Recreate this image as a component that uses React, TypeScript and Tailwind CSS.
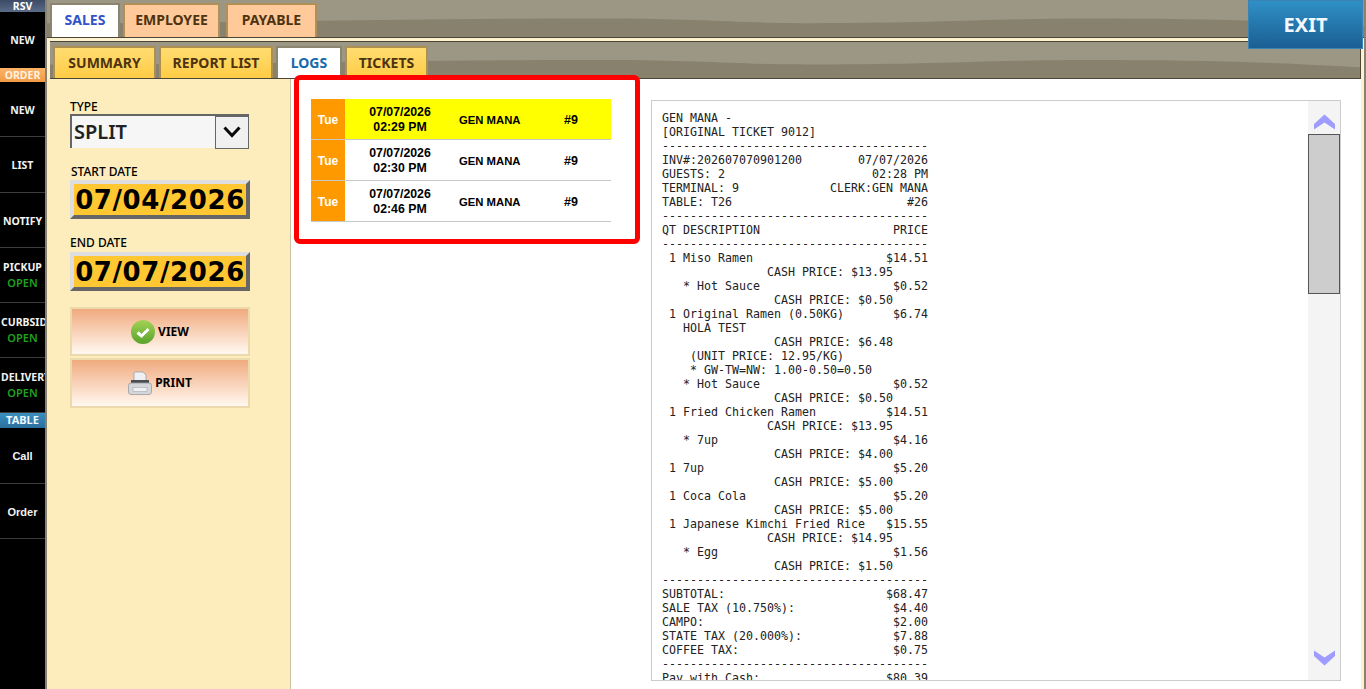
import React from "react";

const r = (l: string, p: string) => l.padEnd(38 - p.length) + p;
const dash = "-".repeat(38);
const cash = (v: string, n = 16) => " ".repeat(n) + "CASH PRICE: " + v;
const lines: string[] = [
  "GEN MANA -",
  "[ORIGINAL TICKET 9012]",
  dash,
  r("INV#:202607070901200", "07/07/2026"),
  r("GUESTS: 2", "02:28 PM"),
  r("TERMINAL: 9", "CLERK:GEN MANA"),
  r("TABLE: T26", "#26"),
  dash,
  r("QT DESCRIPTION", "PRICE"),
  dash,
  r(" 1 Miso Ramen", "$14.51"),
  cash("$13.95", 15),
  r("   * Hot Sauce", "$0.52"),
  cash("$0.50"),
  r(" 1 Original Ramen (0.50KG)", "$6.74"),
  "   HOLA TEST",
  cash("$6.48"),
  "    (UNIT PRICE: 12.95/KG)",
  "    * GW-TW=NW: 1.00-0.50=0.50",
  r("   * Hot Sauce", "$0.52"),
  cash("$0.50"),
  r(" 1 Fried Chicken Ramen", "$14.51"),
  cash("$13.95", 15),
  r("   * 7up", "$4.16"),
  cash("$4.00"),
  r(" 1 7up", "$5.20"),
  cash("$5.00"),
  r(" 1 Coca Cola", "$5.20"),
  cash("$5.00"),
  r(" 1 Japanese Kimchi Fried Rice", "$15.55"),
  cash("$14.95", 15),
  r("   * Egg", "$1.56"),
  cash("$1.50"),
  dash,
  r("SUBTOTAL:", "$68.47"),
  r("SALE TAX (10.750%):", "$4.40"),
  r("CAMPO:", "$2.00"),
  r("STATE TAX (20.000%):", "$7.88"),
  r("COFFEE TAX:", "$0.75"),
  dash,
  r("Pay with Cash:", "$80.39"),
];

const tahoma = "font-['Noto_Sans',sans-serif]";

function Wave() {
  return (
    <svg className="absolute inset-0 h-full w-full" viewBox="0 0 1000 40" preserveAspectRatio="none" aria-hidden>
      <path d="M0 25 C150 25 280 20 422 20 C500 20 520 25 583 25 C680 25 720 20 790 20 C870 20 930 22 1000 28 L1000 40 L0 40 Z" fill="#88816e" />
    </svg>
  );
}

function SideItem({ label, sub, clip, plain, h = "h-[55px]" }: { label: string; sub?: string; clip?: boolean; plain?: boolean; h?: string }) {
  return (
    <div className={`flex flex-col items-center justify-center overflow-hidden border-b border-[#3c3c3c] ${sub ? "" : "pt-[2px]"} ${h}`}>
      <div
        className={`w-full whitespace-nowrap leading-[15px] font-bold text-[#f2f2f2] ${clip ? "pl-px text-left" : "text-center"} ${
          plain ? "font-['Liberation_Sans',sans-serif] text-[11px]" : `${tahoma} text-[10.5px]`
        }`}
      >
        {label}
      </div>
      {sub && <div className={`text-[11px] leading-[15px] font-semibold text-[#1fa01f] ${tahoma}`}>{sub}</div>}
    </div>
  );
}

function TopTab({ label, active, w }: { label: string; active?: boolean; w: string }) {
  return (
    <div
      className={`flex h-[34px] items-center justify-center border-[2px] border-b-0 pb-[3px] text-[14px] font-bold ${tahoma} ${w} ${
        active ? "border-[#8b8570] bg-white text-[#3352c8]" : "border-[#b08f58] bg-[#ffc999] text-[#4d3310]"
      }`}
    >
      {label}
    </div>
  );
}

function SubTab({ label, active, w }: { label: string; active?: boolean; w: string }) {
  return (
    <div
      className={`flex h-[32px] items-center justify-center border-[2px] border-b-0 pb-[1px] text-[14px] font-bold ${tahoma} ${w} ${
        active
          ? "border-[#8b8570] bg-white text-[#1569ad]"
          : "border-[#ad8f50] bg-gradient-to-b from-[#ffdc70] to-[#ffcc44] text-[#4d3310]"
      }`}
    >
      {label}
    </div>
  );
}

function DateBox({ value }: { value: string }) {
  return (
    <div className="h-[39px] w-[180px] border-[4px] border-t-[#dedede] border-l-[#dedede] border-r-[#666] border-b-[#666] bg-[#ffc832] text-center font-['DejaVu_Sans',sans-serif] text-[26px] leading-[32px] font-bold tracking-[0.6px] text-black">
      {value}
    </div>
  );
}

function ActionButton({ icon, label, h }: { icon: React.ReactNode; label: string; h: string }) {
  return (
    <div
      className={`flex w-[180px] items-center justify-center gap-[3px] border-[2px] border-[#ecd9ac] bg-gradient-to-b from-[#efaa7e] to-[#fff8f0] text-[12px] font-bold text-black ${tahoma} ${h}`}
    >
      {icon}
      {label}
    </div>
  );
}

function Row({ time, hi }: { time: string; hi?: boolean }) {
  return (
    <div className={`flex h-[41px] w-[300px] items-center border-b border-[#c8c8c8] font-['Liberation_Sans',sans-serif] font-bold text-black ${hi ? "bg-[#ffff00]" : "bg-white"}`}>
      <div className="flex h-full w-[34px] items-center justify-center bg-[#ff9900] pt-px text-[12px] text-white">Tue</div>
      <div className="w-[110px] pt-[2px] text-center text-[12.3px] leading-[15px]">
        07/07/2026
        <br />
        {time}
      </div>
      <div className="w-[105px] pt-[2px] pl-[4px] text-[11.3px]">GEN MANA</div>
      <div className="pt-[2px] pl-[4px] text-[12.5px]">#9</div>
    </div>
  );
}

export default function App() {
  return (
    <div className="relative flex h-[689px] w-[1366px] overflow-hidden bg-[#fdf1d0]">
      {/* Sidebar */}
      <div className="h-full w-[47px] shrink-0 border-r-[2px] border-[#8a8270] bg-black">
        <div className={`flex h-[12px] items-center justify-center overflow-hidden bg-gradient-to-b from-[#3c4b66] to-[#5a6c88] text-[10.5px] leading-[12px] font-bold text-white ${tahoma}`}>RSV</div>
        <div className="flex h-[56px] items-center justify-center pt-[2px]">
          <span className={`text-[10.5px] font-bold text-[#f2f2f2] ${tahoma}`}>NEW</span>
        </div>
        <div className={`flex h-[14px] items-center justify-center bg-gradient-to-b from-[#ffb366] to-[#f09a44] pt-px text-[10.5px] font-bold text-[#fff3e0] ${tahoma}`}>ORDER</div>
        <SideItem label="NEW" h="h-[55px]" />
        <SideItem label="LIST" h="h-[56px]" />
        <SideItem label="NOTIFY" />
        <SideItem label="PICKUP" sub="OPEN" />
        <SideItem label="CURBSIDE" sub="OPEN" clip />
        <SideItem label="DELIVERY" sub="OPEN" clip />
        <div className={`flex h-[15px] items-center justify-center bg-gradient-to-b from-[#3a90c0] to-[#2a6f9e] text-[11px] font-bold text-[#eef8ff] ${tahoma}`}>TABLE</div>
        <SideItem label="Call" plain h="h-[56px]" />
        <SideItem label="Order" plain />
      </div>

      {/* Main column */}
      <div className="flex h-full min-w-0 flex-1 flex-col">
        {/* Top tab bar */}
        <div className="relative h-[38px] w-[1317px] shrink-0 border-b-[1px] border-[#4a4535] bg-[#9c9684]">
          <Wave />
          <div className="relative flex gap-[3px] pt-[3px] pl-[3px]">
            <TopTab label="SALES" active w="w-[70px]" />
            <TopTab label="EMPLOYEE" w="w-[97px]" />
            <div className="ml-[3px]">
              <TopTab label="PAYABLE" w="w-[91px]" />
            </div>
          </div>
        </div>

        {/* Sub tab bar */}
        <div className="relative mt-[3px] ml-[3px] h-[38px] w-[1311px] shrink-0 border-y-[1px] border-r-[1px] border-[#4a4535] bg-[#9c9684]">
          <Wave />
          <div className="relative flex gap-[3px] pt-[4px] pl-[3px]">
            <SubTab label="SUMMARY" w="w-[103px]" />
            <SubTab label="REPORT LIST" w="w-[114px]" />
            <SubTab label="LOGS" active w="w-[66px]" />
            <SubTab label="TICKETS" w="w-[83px]" />
          </div>
        </div>

        {/* Body */}
        <div className="flex min-h-0 w-[1314px] flex-1">
          <div className={`w-[244px] shrink-0 border-r border-[#c9c0a8] bg-[#fdedbc] pt-[21px] pl-[23px] ${tahoma}`}>
            <div className="text-[12px] leading-[14px] font-medium text-black">TYPE</div>
            <div className="flex h-[34px] w-[179px] items-center justify-between border-[2px] border-r-0 border-b-0 border-[#666] bg-[#f6f6f6] pl-[2px] text-[20px] font-semibold text-[#222]">
              SPLIT
              <div className="flex h-[33px] w-[34px] items-center justify-center border border-[#666] bg-[#f0f0f0]">
                <svg width="20" height="12" viewBox="0 0 20 12" aria-hidden>
                  <path d="M2.5 1.5 L10 9.5 L17.5 1.5" fill="none" stroke="#0a0a0a" strokeWidth="3" />
                </svg>
              </div>
            </div>
            <div className="mt-[17px] pl-[1px] text-[12px] leading-[14px] font-medium text-black">START DATE</div>
            <div className="mt-[1px]">
              <DateBox value="07/04/2026" />
            </div>
            <div className="mt-[17px] text-[12px] leading-[14px] font-medium text-black">END DATE</div>
            <div className="mt-[2px]">
              <DateBox value="07/07/2026" />
            </div>
            <div className="mt-[16px] flex flex-col gap-[2px]">
              <ActionButton
                h="h-[49px]"
                label="VIEW"
                icon={
                  <svg width="24" height="24" viewBox="0 0 24 24" aria-hidden>
                    <defs>
                      <linearGradient id="g1" x1="0" y1="0" x2="0" y2="1">
                        <stop offset="0" stopColor="#a4d255" />
                        <stop offset="1" stopColor="#58a32c" />
                      </linearGradient>
                    </defs>
                    <circle cx="12" cy="12" r="12" fill="url(#g1)" />
                    <path d="M6.5 12.5 L10.5 16 L17.5 9" fill="none" stroke="#fff" strokeWidth="3" />
                  </svg>
                }
              />
              <ActionButton
                h="h-[50px]"
                label="PRINT"
                icon={
                  <svg width="24" height="24" viewBox="0 0 24 24" aria-hidden>
                    <path d="M7 1 H15 L18 4 V11 H6 V2 Z" fill="#eef0f4" stroke="#9aa0a8" strokeWidth="0.8" />
                    <rect x="3" y="9" width="18" height="5" fill="#4a4d52" />
                    <rect x="0.5" y="12" width="23" height="11.5" rx="2.5" fill="#d4d6da" stroke="#9a9da2" strokeWidth="0.8" />
                    <rect x="5" y="16.5" width="14" height="4" fill="#eef0f2" stroke="#a8abb0" strokeWidth="0.6" />
                  </svg>
                }
              />
            </div>
          </div>

          <div className="flex min-w-0 flex-1 bg-white">
            <div className="w-[360px] shrink-0 pt-[20px] pl-[20px]">
              <Row time="02:29 PM" hi />
              <Row time="02:30 PM" />
              <Row time="02:46 PM" />
            </div>
            <div className="mt-[21px] flex h-[581px] w-[690px] overflow-hidden border border-[#cccccc] bg-white">
              <pre className="h-full min-w-0 flex-1 overflow-hidden pt-[10px] pl-[10px] font-['DejaVu_Sans_Mono',monospace] text-[11.63px] leading-[14px] text-[#222]">
                {lines.join("\n")}
              </pre>
              <div className="flex h-full w-[32px] shrink-0 flex-col items-center bg-[#f4f4f4]">
                <div className="flex h-[33px] w-full shrink-0 items-center justify-center pt-[8px]">
                  <svg width="21" height="16" viewBox="0 0 21 16" aria-hidden>
                    <path d="M10.5 0.5 L21 10 L21 15.5 L10.5 8.5 L0 15.5 L0 10 Z" fill="#9f9cff" />
                  </svg>
                </div>
                <div className="h-[160px] w-full shrink-0 border border-[#555] bg-[#cdcdcd]" />
                <div className="flex flex-1 items-end justify-center pb-[14px]">
                  <svg width="21" height="16" viewBox="0 0 21 16" aria-hidden>
                    <path d="M10.5 15.5 L21 6 L21 0.5 L10.5 7.5 L0 0.5 L0 6 Z" fill="#9f9cff" />
                  </svg>
                </div>
              </div>
            </div>
          </div>
        </div>
      </div>

      {/* Right edge */}
      <div className="absolute top-0 right-0 h-full w-[2px] bg-[#8a8270]" />

      {/* Exit button */}
      <div className={`absolute top-0 left-[1248px] flex h-[49px] w-[115px] items-center justify-center border border-[#3a84b5] bg-gradient-to-b from-[#2f90c6] to-[#1b5f93] text-[20px] font-bold text-[#f2f8ff] ${tahoma}`}>
        EXIT
      </div>

      {/* Red annotation */}
      <div className="pointer-events-none absolute top-[75px] left-[294px] h-[169px] w-[346px] rounded-[6px] border-[5px] border-[#ff0000]" />
    </div>
  );
}
